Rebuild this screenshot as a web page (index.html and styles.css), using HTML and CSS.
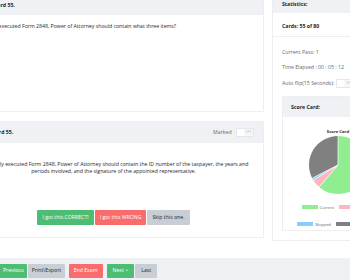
FILE: index.html
```html
<!DOCTYPE html>
<html lang="en">
<head>
    <meta charset="UTF-8">
    <title>Flash Cards</title>
    <link rel="stylesheet" href="styles.css">
</head>
<body>
    <div class="page">
        <div class="layout">
            <div class="main-col">
                <div class="card">
                    <div class="card-header">Front of Card 55.</div>
                    <div class="card-body question">A properly executed Form 2848, Power of Attorney should contain what three items?</div>
                </div>
                <div class="card">
                    <div class="card-header header-row">
                        <span>Back of Card 55.</span>
                        <span class="marked">Marked <span class="switch"><span class="handle"></span><span class="off">OFF</span></span></span>
                    </div>
                    <div class="card-body answer">
                        <p>A properly executed Form 2848, Power of Attorney should contain the ID number of the taxpayer, the years and periods involved, and the signature of the appointed representative.</p>
                        <div class="actions">
                            <button class="btn btn-success">I got this CORRECT!</button>
                            <button class="btn btn-danger">I got this WRONG</button>
                            <button class="btn btn-secondary">Skip this one.</button>
                        </div>
                    </div>
                </div>
            </div>
            <div class="side-col">
                <div class="card">
                    <div class="card-header stats-header">Statistics:</div>
                    <div class="stats-count">Cards: 55 of 80</div>
                    <div class="card-body stats-body">
                        <p>Current Pass: 1</p>
                        <p>Time Elapsed : 00 : 05 : 12</p>
                        <p class="auto-flip">Auto flip(15 Seconds): <span class="switch"><span class="handle"></span><span class="off">OFF</span></span></p>
                        <div class="card score">
                            <div class="card-header score-header">Score Card:</div>
                            <div class="chart">
                                <div class="chart-title">Score Card</div>
                                <svg class="pie" width="60" height="60" viewBox="-30 -30 60 60">
                                    <path d="M0,0 L0,-29 A29,29 0 1,1 -18.83,22.05 Z" fill="#90ee90"/>
                                    <path d="M0,0 L-18.83,22.05 A29,29 0 0,1 -24.73,15.15 Z" fill="#ffb6c1"/>
                                    <path d="M0,0 L-24.73,15.15 A29,29 0 0,1 -25.84,13.17 Z" fill="#87cefa"/>
                                    <path d="M0,0 L-25.84,13.17 A29,29 0 0,1 0,-29 Z" fill="#808080"/>
                                    <g stroke="#fff" stroke-width="0.7">
                                        <line x1="0" y1="0" x2="0" y2="-29"/>
                                        <line x1="0" y1="0" x2="-18.83" y2="22.05"/>
                                        <line x1="0" y1="0" x2="-24.73" y2="15.15"/>
                                        <line x1="0" y1="0" x2="-25.84" y2="13.17"/>
                                    </g>
                                </svg>
                                <ul class="legend">
                                    <li><span class="swatch correct"></span>Correct</li>
                                    <li><span class="swatch wrong"></span>Incorrect</li>
                                    <li><span class="swatch skipped"></span>Skipped</li>
                                    <li><span class="swatch left"></span>Unanswered</li>
                                </ul>
                            </div>
                        </div>
                    </div>
                </div>
            </div>
        </div>
        <div class="footer-bar">
            <div class="btn-group">
                <button class="btn btn-success">First</button>
                <button class="btn btn-success">Previous</button>
                <button class="btn btn-secondary">Print\Export</button>
            </div>
            <button class="btn btn-danger btn-mid">End Exam</button>
            <div class="btn-group">
                <button class="btn btn-success btn-wide">Next &gt;</button>
                <button class="btn btn-secondary btn-wide">Last</button>
            </div>
        </div>
    </div>
</body>
</html>
```

FILE: styles.css
```css
html, body {
    margin: 0;
    overflow: hidden;
}
body {
    font-family: "Open Sans", "Liberation Sans", sans-serif;
    font-size: 5.2px;
    line-height: 7px;
    color: #23282c;
    background: #fff;
}
p {
    margin: 0;
}
.page {
    margin: -5px 0 0 -37px;
}
.layout {
    display: flex;
    gap: 8px;
    align-items: flex-start;
}
.main-col {
    width: 301px;
    flex-shrink: 0;
    display: flex;
    flex-direction: column;
    gap: 9px;
}
.side-col {
    width: 132px;
    flex-shrink: 0;
}
.card {
    background: #fff;
    border: 1px solid #eceef1;
    border-radius: 1px;
}
.card-header {
    background: #f0f1f5;
    padding: 6px 8px;
    font-weight: 700;
}
.header-row {
    display: flex;
    align-items: center;
    justify-content: space-between;
    padding-right: 9px;
}
.card-body {
    padding: 8px;
}
.question {
    height: 96px;
    box-sizing: border-box;
    padding-top: 8px;
}
.answer {
    padding: 17.5px 8px 12px;
    text-align: center;
}
.actions {
    margin-top: 35.5px;
    display: flex;
    justify-content: center;
    gap: 1px;
}
.marked {
    display: flex;
    align-items: center;
    gap: 4px;
    font-weight: 400;
    color: #5c6873;
}
.switch {
    display: inline-flex;
    align-items: center;
    height: 9px;
    border: 1px solid #e4e6ea;
    border-radius: 1px;
    background: #f6f7f8;
    box-sizing: border-box;
    vertical-align: middle;
}
.switch .handle {
    width: 7px;
    height: 7px;
    background: #fff;
}
.switch .off {
    font-size: 3px;
    color: #b8bcc2;
    padding: 0 2px;
}
.btn {
    font-family: inherit;
    font-size: 5.2px;
    line-height: 7px;
    padding: 4px 5px;
    border: 0;
    border-radius: 1px;
    color: #fff;
}
.btn-success {
    background: #4dbd74;
}
.btn-danger {
    background: #f86c6b;
}
.btn-secondary {
    background: #c8ced3;
    color: #23282c;
}
.stats-header {
    padding: 5px 9px;
}
.stats-count {
    padding: 10px 9px 6px;
    font-weight: 700;
    border-bottom: 1px solid #eceef1;
}
.stats-body {
    padding: 11.5px 9px 9px;
    color: #5c6873;
}
.stats-body p {
    margin-bottom: 8px;
}
.stats-body .auto-flip {
    margin-bottom: 8.5px;
    display: flex;
    align-items: center;
    gap: 2px;
}
.score {
    color: #23282c;
}
.score-header {
    padding: 6.5px 8px;
}
.chart {
    padding: 10.5px 8px 2px;
    display: flex;
    flex-direction: column;
    align-items: center;
}
.chart-title {
    font-weight: 700;
    font-size: 4.2px;
}
.legend {
    list-style: none;
    margin: 9px 0 0;
    padding: 0;
    width: 90px;
    display: flex;
    flex-wrap: wrap;
    justify-content: center;
    column-gap: 5px;
    row-gap: 10px;
    font-size: 4.2px;
    color: #666;
}
.legend li {
    display: flex;
    align-items: center;
    gap: 2px;
}
.swatch {
    width: 16px;
    height: 4.5px;
}
.correct {
    background: #90ee90;
}
.wrong {
    background: #ffb6c1;
}
.skipped {
    background: #87cefa;
}
.left {
    background: #808080;
}
.footer-bar {
    margin-top: 17px;
    background: #eff0f4;
    padding: 6px 0 10px 18px;
    display: flex;
    gap: 4px;
}
.btn-group {
    display: flex;
    gap: 1px;
}
.footer-bar .btn {
    padding: 3.5px 3.5px;
}
.footer-bar .btn-mid {
    padding: 3.5px 5px;
}
.footer-bar .btn-wide {
    padding: 3.5px 6px;
}
```
